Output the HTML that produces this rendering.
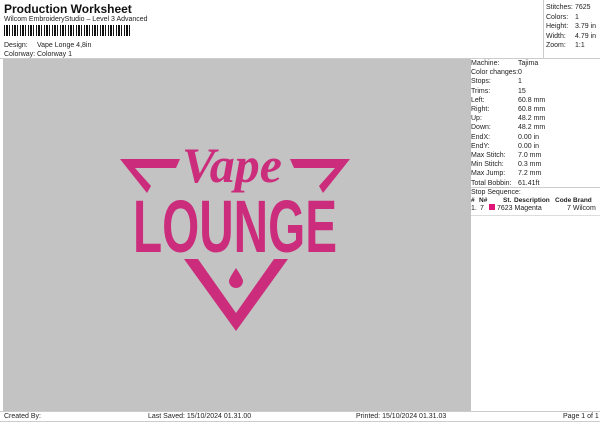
<!DOCTYPE html>
<html><head><meta charset="utf-8"><style>
*{margin:0;padding:0;box-sizing:border-box}
body{width:600px;height:424px;background:#fff;position:relative;overflow:hidden;font-family:"Liberation Sans",Arial,sans-serif;font-size:7px;color:#222}
.a{position:absolute;white-space:nowrap;line-height:9px}
</style></head><body>
<div class="a" style="left:4px;top:2px;font-size:12px;font-weight:bold;line-height:14px;color:#111">Production Worksheet</div>
<div class="a" style="left:4px;top:15px">Wilcom EmbroideryStudio – Level 3 Advanced</div>
<div class="a" style="left:4px;top:25px;width:126px;height:11px;background:repeating-linear-gradient(90deg,#111 0 1px,#fff 1px 2px,#111 2px 4px,#fff 4px 5px,#111 5px 6px,#fff 6px 8px)"></div>
<div class="a" style="left:4px;top:41px">Design:</div><div class="a" style="left:37px;top:41px">Vape Longe 4,8in</div>
<div class="a" style="left:4px;top:50px">Colorway:</div><div class="a" style="left:37px;top:50px">Colorway 1</div>
<div class="a" style="left:0;top:58px;width:600px;border-top:1px solid #ccc"></div>
<div class="a" style="left:543px;top:0;height:58px;border-left:1px solid #ccc"></div>
<div class="a" style="left:546px;top:3px;line-height:9.6px">Stitches:<br>Colors:<br>Height:<br>Width:<br>Zoom:</div>
<div class="a" style="left:575px;top:3px;line-height:9.6px">7625<br>1<br>3.79 in<br>4.79 in<br>1:1</div>
<div class="a" style="left:3px;top:59px;width:464px;height:352px;background:#c3c3c3"></div>
<div class="a" style="left:467px;top:59px;width:4px;height:352px;background:#c3c3c3"></div>
<div class="a" style="left:471px;top:59px;line-height:9.2px">Machine:<br>Color changes:<br>Stops:<br>Trims:<br>Left:<br>Right:<br>Up:<br>Down:<br>EndX:<br>EndY:<br>Max Stitch:<br>Min Stitch:<br>Max Jump:<br>Total Bobbin:</div>
<div class="a" style="left:518px;top:59px;line-height:9.2px">Tajima<br>0<br>1<br>15<br>60.8 mm<br>60.8 mm<br>48.2 mm<br>48.2 mm<br>0.00 in<br>0.00 in<br>7.0 mm<br>0.3 mm<br>7.2 mm<br>61.41ft</div>
<div class="a" style="left:471px;top:187px;width:129px;border-top:1px solid #ccc"></div>
<div class="a" style="left:471px;top:188px">Stop Sequence:</div>
<div class="a" style="left:471px;top:196px;font-size:6.5px;font-weight:bold;text-decoration:underline">
<span style="position:absolute;left:0">#</span><span style="position:absolute;left:8px">N#</span><span style="position:absolute;left:32px">St.</span><span style="position:absolute;left:43px">Description</span><span style="position:absolute;left:84px">Code</span><span style="position:absolute;left:102px">Brand</span></div>
<div class="a" style="left:471px;top:204px">1.</div><div class="a" style="left:480px;top:204px">7</div>
<div class="a" style="left:489px;top:204px;width:6px;height:6px;background:#e0157a"></div>
<div class="a" style="left:497px;top:204px">7623 Magenta</div>
<div class="a" style="left:567px;top:204px">7 Wilcom</div>
<div class="a" style="left:471px;top:215px;width:129px;border-top:1px solid #ddd"></div>
<div class="a" style="left:0;top:411px;width:600px;border-top:1px solid #ccc"></div>
<div class="a" style="left:4px;top:412px">Created By:</div>
<div class="a" style="left:148px;top:412px">Last Saved: 15/10/2024 01.31.00</div>
<div class="a" style="left:356px;top:412px">Printed: 15/10/2024 01.31.03</div>
<div class="a" style="left:563px;top:412px">Page 1 of 1</div>
<div class="a" style="left:0;top:421px;width:600px;border-top:1px solid #ccc"></div>
<svg class="a" style="left:0;top:0" width="600" height="424">
<g fill="#cb2c7b">
<polygon points="120,159 180,159 176,168 135,168 151,186 147,193"/>
<polygon points="350,159 290,159 294,168 335,168 319,186 323,193"/>
<polygon points="184,259 198,259 236,313 274,259 288,259 236,331"/>
<path d="M236,268 C240,274 243,279 243,281 A7,7 0 0 1 229,281 C229,279 232,274 236,268Z"/>
<text x="133" y="252" font-family="Liberation Sans" font-weight="bold" font-size="74" textLength="204" lengthAdjust="spacingAndGlyphs">LOUNGE</text>
<text x="182" y="182" font-family="Liberation Serif" font-style="italic" font-weight="bold" font-size="50" textLength="100" lengthAdjust="spacingAndGlyphs">Vape</text>
</g>
</svg>
</body></html>
